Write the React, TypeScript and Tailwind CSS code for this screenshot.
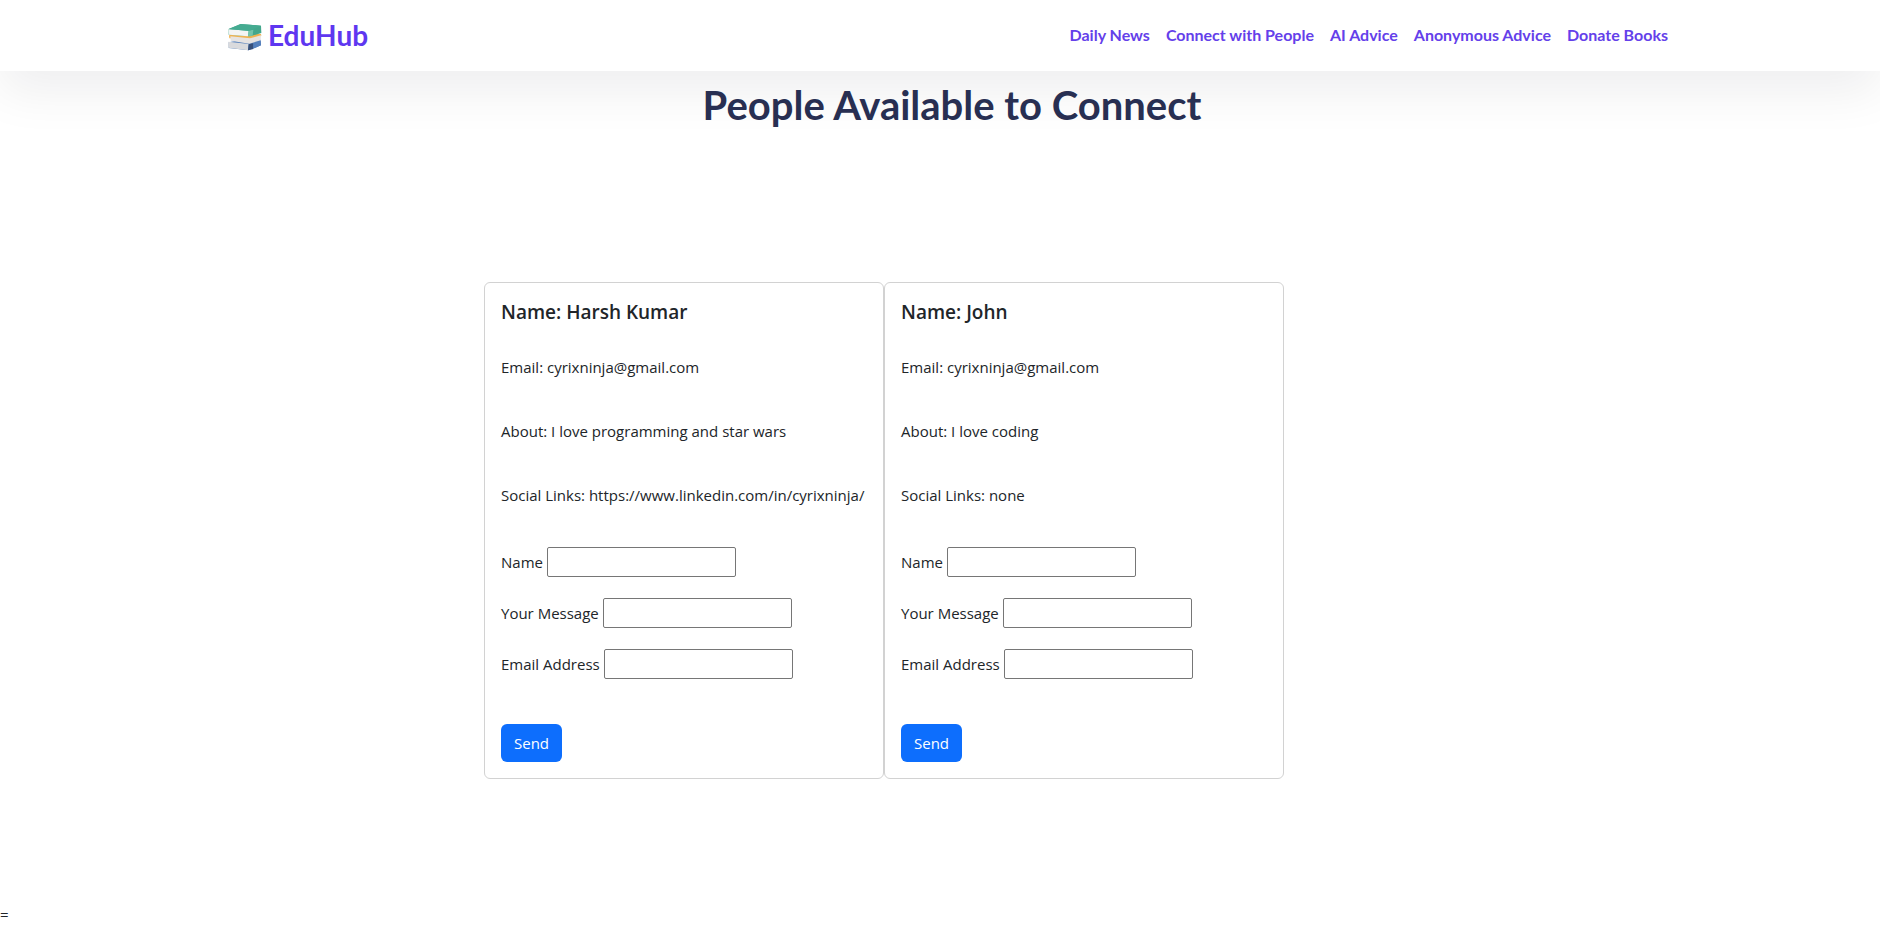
type Person = { id: string; name: string; email: string; about: string; social: string };

const people: Person[] = [
  {
    id: "harsh",
    name: "Harsh Kumar",
    email: "cyrixninja@gmail.com",
    about: "I love programming and star wars",
    social: "https://www.linkedin.com/in/cyrixninja/",
  },
  { id: "john", name: "John", email: "cyrixninja@gmail.com", about: "I love coding", social: "none" },
];

const links = ["Daily News", "Connect with People", "AI Advice", "Anonymous Advice", "Donate Books"];
const fields = ["Name", "Your Message", "Email Address"];

function BooksLogo() {
  return (
    <svg viewBox="0 0 102 84" className="mt-1 h-7 w-[34px]" aria-hidden="true">
      <path d="M2 58 L40 50 L98 50 L99 67 L62 82 L2 75 Z" fill="#5580bc" />
      <path d="M1 56 L62 63 L60 82 L1 74 Z" fill="#d9dadd" />
      <path d="M62 63 L76 61 L76 78 L60 82 Z" fill="#38507a" />
      <path d="M76 61 L98 54 L99 67 L76 77 Z" fill="#5580bc" />
      <path d="M3 37 L42 30 L99 33 L100 39 L66 48 L4 46 Z" fill="#efb352" />
      <path d="M7 40 L66 46 L99 37 L98 52 L64 62 L8 53 Z" fill="#e6e3e2" />
      <path d="M2 18 L38 3 L99 8 L100 30 L66 40 L2 35 Z" fill="#43a78c" />
      <path d="M2 19 L62 23 L60 40 L3 35 Z" fill="#f3f4f4" />
      <path d="M62 23 L76 20 L74 38 L60 40 Z" fill="#73c4ab" />
      <path d="M2 18 L38 3 L99 8 L62 24 Z" fill="#45ab91" />
    </svg>
  );
}

function PersonCard({ person }: { person: Person }) {
  return (
    <article className="w-100 rounded-md border border-[#d2d2d2] bg-white p-4">
      <h2 className="pt-px text-[19px] leading-6 font-semibold">Name: {person.name}</h2>
      <div className="mt-[31px] flex flex-col gap-10">
        <p>Email: {person.email}</p>
        <p>About: {person.about}</p>
        <p>Social Links: {person.social}</p>
      </div>
      <form className="mt-10" onSubmit={(e) => e.preventDefault()}>
        <div className="flex flex-col gap-[21px]">
          {fields.map((field) => {
            const id = `${person.id}-${field.toLowerCase().replace(" ", "-")}`;
            return (
              <div key={field} className="flex items-center gap-1">
                <label htmlFor={id}>{field}</label>
                <input
                  id={id}
                  type={field === "Email Address" ? "email" : "text"}
                  className="h-[30px] w-[189px] rounded-xs border border-[#767676] bg-white px-0.5"
                />
              </div>
            );
          })}
        </div>
        <button type="submit" className="mt-[45px] block h-[38px] rounded-md bg-[#0d6efd] px-[13px] text-white">
          Send
        </button>
      </form>
    </article>
  );
}

export default function App() {
  return (
    <div className="min-h-screen bg-white font-['Open_Sans',sans-serif] text-[15px] leading-6 text-[#212529]">
      <header className="bg-white pl-4 shadow-[0_20px_50px_rgba(20,20,32,0.07)]">
        <div className="mx-auto flex h-[71px] max-w-[1440px] items-center justify-between pb-0.5 font-['Lato',sans-serif]">
          <a href="#" className="flex items-center gap-[6px] text-[28px] font-bold text-[#5e37f0]">
            <BooksLogo />
            EduHub
          </a>
          <nav className="flex gap-4 text-base font-bold text-[#6440ea]">
            {links.map((link) => (
              <a key={link} href="#">
                {link}
              </a>
            ))}
          </nav>
        </div>
      </header>
      <main>
        <h1 className="mt-2 pl-6 text-center font-['Lato',sans-serif] text-[40px] leading-[52px] font-bold text-[#282f52]">
          People Available to Connect
        </h1>
        <section className="mx-auto mt-[151px] flex max-w-[912px]">
          {people.map((person) => (
            <PersonCard key={person.id} person={person} />
          ))}
        </section>
      </main>
      <footer className="mt-[123px]">=</footer>
    </div>
  );
}
